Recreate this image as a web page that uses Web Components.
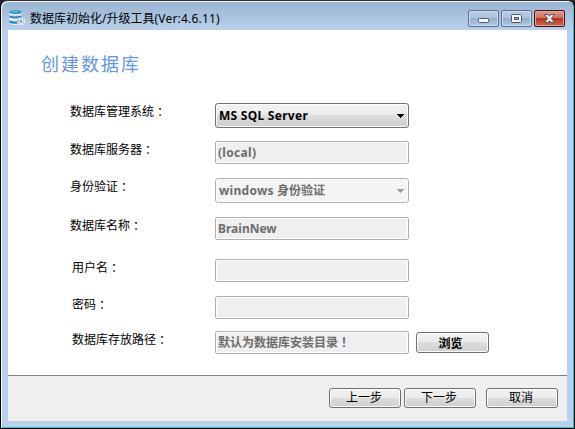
<!DOCTYPE html>
<html lang="zh-CN"><head><meta charset="utf-8"><title>数据库初始化/升级工具</title>
<style>
html,body{margin:0;width:575px;height:429px;overflow:hidden;background:#26242b}
body{font-family:"Noto Sans","Noto Sans CJK SC",sans-serif;font-size:12px;color:#000}
form-row:nth-of-type(1){margin-top:25px}
form-row:nth-of-type(2){margin-top:13px}
form-row:nth-of-type(3){margin-top:14px}
form-row:nth-of-type(4){margin-top:14px}
form-row:nth-of-type(5){margin-top:19px}
form-row:nth-of-type(6){margin-top:14px}
form-row:nth-of-type(7){margin-top:12px}
</style></head><body>
<app-window caption="数据库初始化/升级工具" version="(Ver:4.6.11)">
<page-title>创建数据库</page-title>
<form-row label="数据库管理系统" style="--lift:-4.5px"><select-box style="letter-spacing:.27px">MS SQL Server</select-box></form-row>
<form-row label="数据库服务器"><text-box style="letter-spacing:.3px">(local)</text-box></form-row>
<form-row label="身份验证" style="--lift:-4.5px"><select-box disabled><span style="letter-spacing:.3px">windows</span> 身份验证</select-box></form-row>
<form-row label="数据库名称"><text-box>BrainNew</text-box></form-row>
<form-row label="用户名" style="--indent:2px"><text-box></text-box></form-row>
<form-row label="密码" style="--indent:2px"><text-box></text-box></form-row>
<form-row label="数据库存放路径" style="--indent:2px"><text-box>默认为数据库安装目录<span style="font-family:'Noto Sans CJK TC'" lang="zh-TW">！</span></text-box><push-button style="--w:73px;--h:21px;--tx:-2px;--ty:1px;font-weight:700">浏览</push-button></form-row>
<push-button slot="footer" style="--tx:-1px">上一步</push-button>
<push-button slot="footer" style="margin-left:3px;--tx:-1px">下一步</push-button>
<push-button slot="footer" style="margin-left:10px;--tx:-1px">取消</push-button>
</app-window>
<script>
const define=(name,html)=>customElements.define(name,class extends HTMLElement{
  constructor(){
    super();
    const t=document.createElement('template');t.innerHTML=html;
    this.attachShadow({mode:'open'}).append(t.content.cloneNode(true));
  }
  connectedCallback(){
    this.shadowRoot.querySelectorAll('[data-attr]').forEach(e=>e.textContent=this.getAttribute(e.dataset.attr)||'');
  }
});
define('push-button',`<style>
:host{box-sizing:border-box;flex:none;display:flex;align-items:center;justify-content:center;width:var(--w,72px);height:var(--h,20px);
border:1px solid #707070;border-radius:3px;box-shadow:inset 0 0 0 1px #fcfcfc;background:linear-gradient(#f2f2f2,#ebebeb 50%,#dddddd 50%,#cfcfcf);font-size:12px;line-height:18px;white-space:nowrap}
span{position:relative;top:var(--ty,0);left:var(--tx,0)}
</style><span><slot></slot></span>`);
define('text-box',`<style>
:host{box-sizing:border-box;flex:none;display:flex;align-items:center;width:194px;height:23px;border:1px solid #afafaf;border-radius:2px;
box-shadow:inset 0 0 0 1px #fff;background:#efefef;color:#6d6d6d;padding-left:2px;font-weight:700;font-size:12px;line-height:20px;white-space:nowrap}
</style><span><slot></slot></span>`);
define('select-box',`<style>
:host{box-sizing:border-box;flex:none;display:flex;align-items:center;justify-content:space-between;width:194px;height:25px;border:1px solid #707070;border-radius:3px;
box-shadow:inset 0 0 0 1px #fcfcfc;background:linear-gradient(#f2f2f2,#ebebeb 50%,#dddddd 50%,#cfcfcf);padding:0 4px 0 3px;font-weight:700;font-size:12px;line-height:20px;white-space:nowrap}
:host([disabled]){border-color:#adb2b5;background:#f4f4f4;color:#6d6d6d}
svg{display:block}:host([disabled]) svg{color:#a0a0a0}
</style><span><slot></slot></span><svg width="7" height="4" viewBox="0 0 7 4" shape-rendering="crispEdges"><path fill="currentColor" d="M0 0h7v1h-1v1h-1v1h-1v1h-1v-1h-1v-1h-1v-1h-1z"/></svg>`);
define('form-row',`<style>
:host{display:flex;align-items:center;padding-left:62px}
.label{box-sizing:border-box;width:145px;padding-left:var(--indent,0);line-height:18px;height:18px;position:relative;top:var(--lift,-3.5px);white-space:nowrap}
i{font-style:normal;font-family:"Noto Sans CJK TC";position:relative;top:1px}
.fields{display:flex;align-items:center;gap:7px}
</style><div class="label"><span data-attr="label"></span><i lang="zh-TW">：</i></div><div class="fields"><slot></slot></div>`);
define('page-title',`<style>
:host{display:block;box-sizing:border-box;padding:20px 0 0 33px;height:48px;font-size:18px;line-height:28px;letter-spacing:2px;color:#6495ed}
</style><slot></slot>`);
define('caption-buttons',`<style>
:host{display:flex;gap:2px;margin:9px 9px 0 auto}
b{box-sizing:border-box;display:flex;align-items:center;justify-content:center;width:31px;height:17px;border:1px solid #5f6f87;border-radius:2px;box-shadow:inset 0 0 0 1px #cbdcee;background:linear-gradient(#b9cde2,#aec4dd 45%,#92aecd 46%,#aec8e3)}
b.x{border-color:#470f1c;box-shadow:inset 0 0 0 1px #e4a090;background:linear-gradient(#df9b8c,#cf7060 45%,#b5321b 46%,#cf6551)}
svg{display:block}
</style>
<b><svg width="13" height="13"><rect x="1.5" y="6.5" width="10" height="4" rx="1" fill="#f8f8f8" stroke="#505969"/></svg></b>
<b><svg width="13" height="13"><rect x="1.5" y="2.5" width="10" height="8" rx="1" fill="#f8f8f8" stroke="#505969"/><rect x="4.5" y="5.5" width="4" height="2" fill="#8ca9c7" stroke="#505969"/></svg></b>
<b class="x"><svg width="13" height="13" viewBox="0 0 13 13"><path d="M1.5 2.5h3.5l1.5 1.8 1.5-1.8h3.5l-3.2 4 3.2 4H8L6.5 8.7 5 10.5H1.5l3.2-4z" fill="#f8f8f8" stroke="#555562"/></svg></b>`);
define('db-icon',`<style>:host{display:block;margin:9px 5px 0 8px}svg{display:block}</style>
<svg width="16" height="16" viewBox="0 0 16 16">
<path d="M.5 2.2v10.8C1 15.8 11 15.8 12.5 13V2.2z" fill="#eef4f8"/>
<ellipse cx="6.5" cy="2.2" rx="6" ry="1.9" fill="#238bc4"/><ellipse cx="6" cy="1.9" rx="4" ry=".8" fill="#65b8df"/>
<path d="M.5 5.4q5.5 1.8 12 0v2.2Q6 9.6 .5 7.6zM.5 10.6q5 1.8 9 .4v2.4q-5 1-9-.4z" fill="#1f83bd"/>
<path d="M.5 4.9q5.5 2 12 0M.5 9.8q5 2 9 .5" fill="none" stroke="#b5c8d4" stroke-width=".7"/>
<circle cx="12" cy="11.3" r="3.1" fill="#f8f9fa" stroke="#8f9ba5" stroke-width=".8"/>
<circle cx="12" cy="11.3" r="3.5" fill="none" stroke="#f5f7f9" stroke-width="1.4" stroke-dasharray="1.6 1.15"/>
<circle cx="12" cy="11.3" r="1.3" fill="#78a6c5" stroke="#8d9da8" stroke-width=".5"/></svg>`);
define('app-window',`<style>
:host{box-sizing:border-box;display:flex;flex-direction:column;width:575px;height:429px;border:1px solid #000;border-top-color:#302c34;border-radius:7px 7px 0 0;
background:linear-gradient(#99b4d1,#b9d1ea 29px);box-shadow:inset 1px 1px #f4f9fd,inset -1px -1px #35bfdc}
header{display:flex;align-items:flex-start;height:29px;flex:none}
.cap{font-size:12px;line-height:18px;padding-top:9px;white-space:nowrap}
.ver{letter-spacing:.2px}
main{flex:none;box-sizing:border-box;width:559px;height:345px;margin-left:7px;background:#fff}
footer{box-sizing:border-box;display:flex;justify-content:flex-end;width:559px;height:46px;margin-left:7px;padding:12px 9px 0 0;border-top:1px solid #808080;background:#efefef}
</style><header><db-icon></db-icon><span class="cap"><span data-attr="caption"></span><span class="ver" data-attr="version"></span></span><caption-buttons></caption-buttons></header>
<main><slot></slot></main><footer><slot name="footer"></slot></footer>`);
</script></body></html>
